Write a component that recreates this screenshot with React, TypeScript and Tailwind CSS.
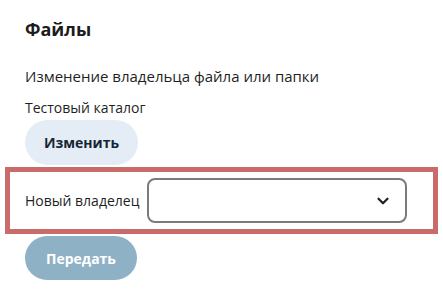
import React from 'react';
import { ChevronDown } from 'lucide-react';

const App: React.FC = () => {
  return (
    <div className="w-[443px] h-[298px] bg-white text-[#1f1f1f] overflow-hidden" style={{ fontFamily: '"Open Sans", "Noto Sans", sans-serif' }}>
      <div className="pt-[16px]">
        <h1 className="pl-[25px] text-[18px] font-bold leading-[26px] text-[#1c1c1c]">Файлы</h1>
        <p className="pl-[25px] mt-[23px] text-[15px] leading-[22px]">Изменение владельца файла или папки</p>
        <p className="pl-[25px] mt-[11px] text-[14px] leading-[20px]">Тестовый каталог</p>
        <div className="pl-[25px] mt-[2px]">
          <button className="h-[45px] w-[113px] rounded-full bg-[#e4edf5] text-[14px] font-bold text-[#152535]">
            Изменить
          </button>
        </div>

        {/* Highlighted owner row */}
        <div className="mx-[5px] mt-[2px] border-[5px] border-[#c86b6a] flex items-center pl-[15px] h-[67px]">
          <label className="text-[14px] text-[#1f1f1f] mr-[8px]">Новый владелец</label>
          <div className="relative w-[260px] h-[45px] rounded-[8px] border-2 border-[#7b7b7b] bg-white">
            <ChevronDown className="absolute right-[13px] top-[12px] h-[18px] w-[18px] text-[#222]" strokeWidth={3} />
          </div>
        </div>

        <div className="pl-[25px] mt-[2px]">
          <button className="h-[44px] w-[112px] rounded-full bg-[#8fb1c5] text-[14px] font-bold text-white">
            Передать
          </button>
        </div>
      </div>
    </div>
  );
};

export default App;
